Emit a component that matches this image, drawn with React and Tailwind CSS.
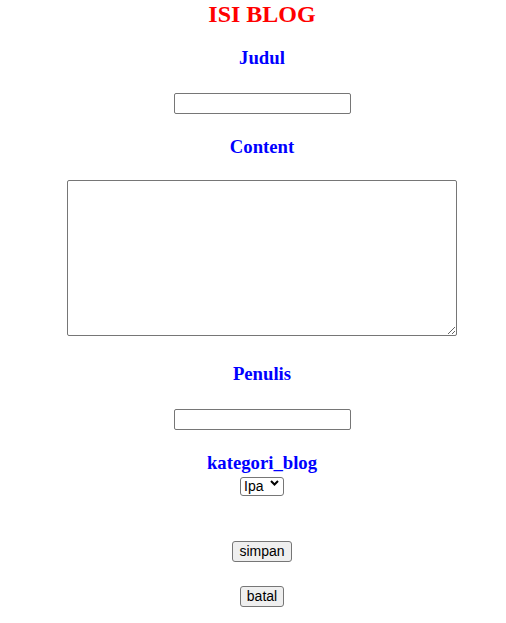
const serif = "font-['Liberation_Serif','Times_New_Roman',serif]";
const sans = "font-['Liberation_Sans',Arial,sans-serif]";

const Label = ({ children, className }) => (
  <h3 className={`${serif} text-[18.72px] leading-[21px] font-bold text-[#0000ff] ${className}`}>
    {children}
  </h3>
);

const TextInput = ({ className }) => (
  <input
    type="text"
    className={`${sans} w-[177px] h-[21px] border border-[#767676] rounded-[2px] bg-white px-[2px] text-[13.33px] text-black outline-none ${className}`}
  />
);

const Button = ({ children, className }) => (
  <button
    className={`${sans} shrink-0 h-[21px] px-[6px] py-[1px] border border-[#767676] rounded-[3px] bg-[#efefef] text-[14px] leading-[17px] text-black ${className}`}
  >
    {children}
  </button>
);

export default function App() {
  return (
    <div className="w-[506px] min-h-[623px] pl-[18px] bg-white flex flex-col items-center">
      <h2 className={`${serif} text-[24px] leading-[28px] font-bold text-[#ff0000]`}>ISI BLOG</h2>

      <Label className="mt-[19px]">Judul</Label>
      <TextInput className="mt-[25px]" />

      <Label className="mt-[22px]">Content</Label>
      <textarea className="mt-[23px] w-[390px] h-[156px] border border-[#767676] rounded-[2px] bg-white outline-none resize" />

      <Label className="mt-[27px]">Penulis</Label>
      <TextInput className="mt-[25px]" />

      <Label className="mt-[22px]">kategori_blog</Label>
      <div className="relative mt-0 w-[44px] h-[19px]">
        <select
          className={`${sans} appearance-none w-full h-full border border-[#767676] rounded-[3px] bg-white pl-[3px] text-[14px] leading-[17px] text-black outline-none`}
        >
          <option>Ipa</option>
          <option>Ips</option>
        </select>
        <svg
          className="pointer-events-none absolute right-[5px] top-[7px]"
          width="9"
          height="6"
          viewBox="0 0 9 6"
        >
          <path d="M1 1 L4.5 4.5 L8 1" fill="none" stroke="#000" strokeWidth="2" />
        </svg>
      </div>

      <Button className="mt-[49px]">simpan</Button>
      <Button className="mt-[24px]">batal</Button>
    </div>
  );
}
